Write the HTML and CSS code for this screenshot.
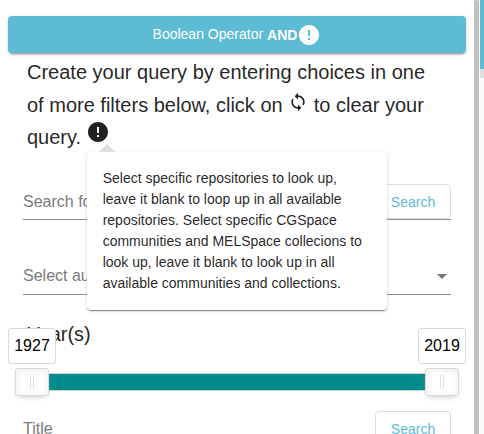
FILE: index.html
```html
<!DOCTYPE html>
<html lang="en">
<head>
<meta charset="utf-8">
<title>Search filters</title>
<link rel="stylesheet" href="styles.css">
</head>
<body>
<div class="app">
  <aside class="sidebar">
    <button class="operator"><span>Boolean Operator</span><b>AND</b><svg class="info" viewBox="0 0 24 24"><path d="M12 2C6.48 2 2 6.48 2 12s4.48 10 10 10 10-4.48 10-10S17.52 2 12 2zm1 15h-2v-2h2v2zm0-4h-2V7h2v6z"/></svg></button>
    <div class="intro">Create your query by entering choices in one of more filters below, click on <svg class="loop" viewBox="0 0 24 24"><path d="M12 4V1L8 5l4 4V6c3.31 0 6 2.69 6 6 0 1.01-.25 1.97-.7 2.8l1.46 1.46C19.54 15.03 20 13.57 20 12c0-4.42-3.58-8-8-8zm0 14c-3.31 0-6-2.69-6-6 0-1.01.25-1.97.7-2.8L5.24 7.74C4.46 8.97 4 10.43 4 12c0 4.42 3.58 8 8 8v3l4-4-4-4v3z"/></svg> to clear your query. <span class="hint"><svg class="info" viewBox="0 0 24 24"><path d="M12 2C6.48 2 2 6.48 2 12s4.48 10 10 10 10-4.48 10-10S17.52 2 12 2zm1 15h-2v-2h2v2zm0-4h-2V7h2v6z"/></svg><span class="popover">Select specific repositories to look up, leave it blank to loop up in all available repositories. Select specific CGSpace communities and MELSpace collecions to look up, leave it blank to look up in all available communities and collections.</span></span></div>
    <div class="field"><span>Search for</span><button class="search">Search</button></div>
    <div class="field select"><span>Select authors</span><i class="caret"></i></div>
    <h2 class="year">Year(s)</h2>
    <div class="slider">
      <div class="handle"><span class="value">1927</span></div>
      <div class="track"></div>
      <div class="handle"><span class="value">2019</span></div>
    </div>
    <div class="field title"><span>Title</span><button class="search">Search</button></div>
  </aside>
  <div class="scrollbar"></div>
  <div class="page"><div class="toolbar"></div></div>
</div>
</body>
</html>
```

FILE: styles.css
```css
*, *::before, *::after { box-sizing: border-box; }
body {
  margin: 0;
  height: 434px;
  overflow: hidden;
  background: #fff;
  color: rgba(0, 0, 0, .87);
  font-family: "Liberation Sans", Arial, sans-serif;
}
button { font-family: inherit; }
.app { display: flex; height: 434px; overflow: hidden; }
.sidebar { width: 474px; padding: 16px 8px 0; }
.scrollbar { width: 5px; background: #c1c1c1; border-radius: 2px 2px 0 0; }
.page { width: 5px; padding-left: 1px; background: #fafafa; }
.toolbar {
  height: 69px;
  background: #5dbbd3;
  box-shadow: 0 9px 0 #dedede;
}

.operator {
  display: flex;
  align-items: center;
  justify-content: center;
  width: 458px;
  height: 37px;
  padding: 0;
  border: 0;
  border-radius: 4px;
  background: #5dbbd3;
  color: #fff;
  font-size: 14px;
  box-shadow: 0 3px 1px -2px rgba(0, 0, 0, .2), 0 2px 2px 0 rgba(0, 0, 0, .14), 0 1px 5px 0 rgba(0, 0, 0, .12);
}
.operator span { margin: 0 4px 2px 0; }
.info { width: 24px; height: 24px; fill: currentColor; }

.intro {
  height: 98px;
  padding: 3px 19px 0;
  font-size: 20px;
  line-height: 32.5px;
}
.loop { width: 20px; height: 20px; margin: 0; vertical-align: 0; fill: currentColor; }
.hint { position: relative; display: inline-block; width: 24px; height: 16px; margin-left: -1px; line-height: 0; }
.hint .info { position: absolute; left: .5px; top: -8px; }
.popover {
  position: absolute;
  z-index: 5;
  left: 1px;
  top: 24px;
  width: 300px;
  height: 158px;
  padding: 16px;
  border-radius: 4px;
  background: #fff;
  font-size: 14px;
  line-height: 21px;
  box-shadow: 0 3px 1px -2px rgba(0, 0, 0, .2), 0 1px 1px 0 rgba(0, 0, 0, .3), 0 1px 4px 0 rgba(0, 0, 0, .12);
}
.popover::before {
  content: "";
  position: absolute;
  left: 12px;
  top: -8px;
  border: solid transparent;
  border-width: 0 8px 8px;
  border-bottom-color: #dedede;
}

.field {
  display: flex;
  align-items: center;
  justify-content: space-between;
  height: 36px;
  margin: 33px 15px 0;
  border-bottom: 1px solid #8c8c8c;
  color: #7b7b7b;
  font-size: 16px;
}
.search {
  width: 76px;
  height: 36px;
  padding: 0;
  border: 1px solid #dedede;
  border-radius: 4px;
  background: transparent;
  color: #5dbbd3;
  font-size: 14px;
}
.field .search { flex: none; height: 35px; padding-top: 1px; }
.select { margin-top: 39px; }
.select span { margin-bottom: 2px; }
.caret {
  margin-right: 4px;
  border: solid transparent;
  border-width: 5px 5px 0;
  border-top-color: #757575;
}

.year {
  margin: 23px 19px 0;
  font-size: 20px;
  font-weight: 400;
  line-height: 32px;
}
.slider { display: flex; align-items: center; height: 28px; margin: 18px 7px 0; }
.track {
  flex: 1;
  height: 18px;
  border: solid #d3d3d3;
  border-width: 1px 0;
  background: #008b8b;
}
.handle {
  position: relative;
  display: flex;
  align-items: center;
  justify-content: center;
  width: 34px;
  height: 28px;
  border: 1px solid #d9d9d9;
  border-radius: 3px;
  background: #fff;
  box-shadow: inset 0 0 1px #fff, inset 0 1px 7px #ebebeb, 0 3px 6px -3px #bbb;
}
.handle::after {
  content: "";
  width: 4px;
  height: 14px;
  border: solid #e0e0e0;
  border-width: 0 1px;
}
.value {
  position: absolute;
  left: 50%;
  bottom: 31px;
  width: 48px;
  height: 36px;
  transform: translateX(-50%);
  border: 1px solid #d9d9d9;
  border-radius: 3px;
  background: #fff;
  color: #000;
  font-size: 16px;
  line-height: 34px;
  text-align: center;
}
.title { margin-top: 15px; }
```
